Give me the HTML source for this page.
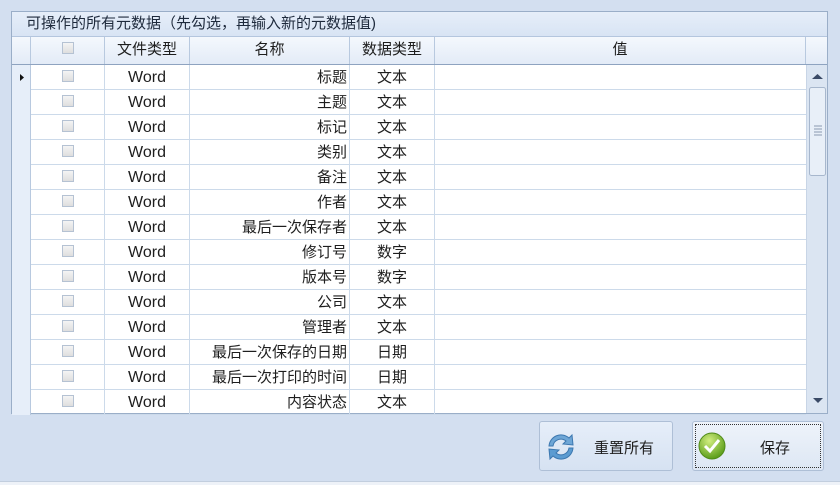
<!DOCTYPE html>
<html><head><meta charset="utf-8"><style>
*{margin:0;padding:0;box-sizing:border-box}
body{width:840px;height:485px;background:#d3dff0;font-family:"Liberation Sans","Microsoft YaHei","Noto Sans CJK SC",sans-serif;position:relative;overflow:hidden;font-size:15px;color:#1e1e1e}
.box{position:absolute;left:11px;top:11px;width:817px;height:403px;border:1px solid #9aaec8;background:#fff}
.title{position:absolute;left:0;top:0;width:815px;height:25px;background:linear-gradient(#e6eef9,#d8e4f4);border-bottom:1px solid #b4c6de;font-size:15px;line-height:23px;padding-left:14px;color:#1e2a3c}
.hdr{position:absolute;left:0;top:25px;width:815px;height:28px;background:linear-gradient(#f4f8fd,#e3ebf7);border-bottom:1px solid #8ea3c0}
.c{position:absolute;top:0;height:100%;border-right:1px solid #b8c9df;text-align:center;line-height:26px}
.row{position:absolute;left:0;width:794px;height:25px;border-bottom:1px solid #ccdaea}
.rc{position:absolute;top:0;height:25px;border-right:1px solid #ccdaea;line-height:25px;text-align:center}
.cb{display:inline-block;width:12px;height:12px;border:1px solid #b5c2d3;background:linear-gradient(#f4f4f4,#dedede);vertical-align:middle;margin-top:-4px}
.rh{background:#e6eef9;border-right:1px solid #b8c9df}
.sb{position:absolute;left:794px;top:53px;width:21px;height:348px;background:#dbe5f2;border-left:1px solid #c8d5e6}
.btn{position:absolute;top:421px;height:50px;border:1px solid #aebfd6;border-radius:3px;background:linear-gradient(#e6eef9,#d6e2f2);font-size:15px}
</style></head><body>
<div class="box">
<div class="title">可操作的所有元数据（先勾选，再输入新的元数据值)</div>
<div class="hdr">
<div class="c" style="left:0;width:19px"></div>
<div class="c" style="left:19px;width:74px"><span class="cb"></span></div>
<div class="c" style="left:93px;width:85px">文件类型</div>
<div class="c" style="left:178px;width:160px">名称</div>
<div class="c" style="left:338px;width:85px">数据类型</div>
<div class="c" style="left:423px;width:371px">值</div>
</div>
<div id="rows"></div>
<div class="sb">
<svg width="21" height="348" style="position:absolute;left:0;top:0">
<path d="M5 14 L10.5 9 L16 14 Z" fill="#3a4a66"/>
<rect x="2.5" y="22.5" width="16" height="88" rx="2" fill="#e8eff8" stroke="#a7b7cd"/>
<path d="M7 61h8M7 64h8M7 67h8M7 70h8" stroke="#8a9ab0"/>
<path d="M6 333 L16 333 L11 338 Z" fill="#3a4a66"/>
</svg>
</div>
</div>
<div class="btn" style="left:539px;width:134px">
<svg width="36" height="36" style="position:absolute;left:3px;top:7px" viewBox="0 0 36 36">
<path d="M6 17 A12 12 0 0 1 26 9 L29 6 L30 16 L20 15 L23 12 A8 8 0 0 0 10 17 Z" fill="#6ea6d6" stroke="#3d78b0"/>
<path d="M30 19 A12 12 0 0 1 10 27 L7 30 L6 20 L16 21 L13 24 A8 8 0 0 0 26 19 Z" fill="#5b9bd1" stroke="#3d78b0"/>
</svg>
<span style="position:absolute;left:54px;top:15px">重置所有</span></div>
<div class="btn" style="left:692px;width:132px;background:linear-gradient(#eef3fa,#dde7f4)">
<div style="position:absolute;left:2px;top:2px;right:2px;bottom:2px;border:1px dotted #333"></div>
<svg width="30" height="30" style="position:absolute;left:4px;top:9px" viewBox="0 0 30 30">
<defs><radialGradient id="g" cx="40%" cy="30%" r="70%"><stop offset="0" stop-color="#d2ee80"/><stop offset="1" stop-color="#5b9d1a"/></radialGradient></defs>
<circle cx="15" cy="15" r="13" fill="url(#g)" stroke="#4f8a18"/>
<path d="M8 15 L13 20 L22 9" fill="none" stroke="#fff" stroke-width="3"/>
</svg>
<span style="position:absolute;left:67px;top:15px">保存</span></div>
<div style="position:absolute;left:0;top:481px;width:840px;height:4px;background:#eef2f8;border-top:1px solid #c2cede"></div>
<script>
var d=[["标题","文本"],["主题","文本"],["标记","文本"],["类别","文本"],["备注","文本"],["作者","文本"],["最后一次保存者","文本"],["修订号","数字"],["版本号","数字"],["公司","文本"],["管理者","文本"],["最后一次保存的日期","日期"],["最后一次打印的时间","日期"],["内容状态","文本"]];
var h="";
d.forEach(function(r,i){
h+='<div class="row" style="top:'+(53+i*25)+'px">'+
'<div class="rc rh" style="left:0;width:19px">'+(i==0?'<svg width="19" height="25"><path d="M8 9 L12 12.5 L8 16Z" fill="#111"/></svg>':'')+'</div>'+
'<div class="rc" style="left:19px;width:74px"><span class="cb"></span></div>'+
'<div class="rc" style="left:93px;width:85px;font-size:16px">Word</div>'+
'<div class="rc" style="left:178px;width:160px;text-align:right;padding-right:2px">'+r[0]+'</div>'+
'<div class="rc" style="left:338px;width:85px">'+r[1]+'</div>'+
'<div class="rc" style="left:423px;width:371px;border-right:none"></div></div>';
});
document.getElementById("rows").innerHTML=h;
</script>
</body></html>
